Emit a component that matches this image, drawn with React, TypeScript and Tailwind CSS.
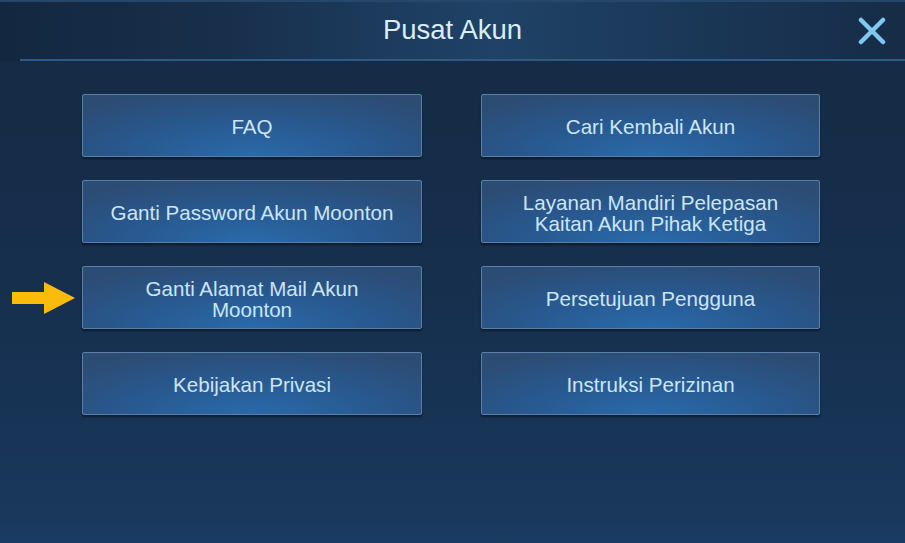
import React from "react";

const items: string[][] = [
  ["FAQ"],
  ["Cari Kembali Akun"],
  ["Ganti Password Akun Moonton"],
  ["Layanan Mandiri Pelepasan", "Kaitan Akun Pihak Ketiga"],
  ["Ganti Alamat Mail Akun", "Moonton"],
  ["Persetujuan Pengguna"],
  ["Kebijakan Privasi"],
  ["Instruksi Perizinan"],
];

function Btn({ lines }: { lines: string[] }) {
  return (
    <div className="h-[63px] rounded-[2px] border border-[#5a80a8] bg-[radial-gradient(ellipse_70%_110%_at_50%_100%,#2a6aaa_0%,#28588e_55%,#2c4c74_100%)] shadow-[0_2px_2px_rgba(5,15,30,0.6)] flex flex-col items-center justify-center pt-[2px] text-[20.6px] leading-[21px] text-[#cce5f7]">
      {lines.map((l) => (
        <span key={l}>{l}</span>
      ))}
    </div>
  );
}

export default function App() {
  return (
    <div
      className="relative w-[905px] h-[543px] overflow-hidden bg-[linear-gradient(180deg,#152a43_0%,#16304f_60%,#19385c_95%,#1b3c62_100%)]"
      style={{ fontFamily: '"Liberation Sans", Arial, sans-serif' }}
    >
      {/* header */}
      <div className="relative h-[61px] border-t-2 border-[#27476a] bg-[linear-gradient(90deg,#132740_0%,#182f4b_25%,#1d3d60_45%,#1f4266_55%,#1b3858_75%,#162c47_100%)]">
        <div className="absolute left-[20px] right-0 bottom-0 h-[2px] bg-[#2d5b86]" />
        <div className="h-full flex items-center justify-center pb-[3px] text-[27.5px] text-[#dcecf8]">
          Pusat Akun
        </div>
        <div className="absolute right-[19px] top-[15px] w-[28px] h-[28px]">
          <svg viewBox="0 0 28 28" width="28" height="28">
            <path d="M3 3 L25 25 M25 3 L3 25" stroke="#80c8f2" strokeWidth="4.5" strokeLinecap="round" />
          </svg>
        </div>
      </div>

      {/* buttons */}
      <div className="pt-[33px] pl-[82px] grid grid-cols-[340px_339px] gap-x-[59px] gap-y-[23px]">
        {items.map((l, i) => (
          <Btn key={i} lines={l} />
        ))}
      </div>

      {/* annotation arrow */}
      <svg className="absolute left-[11px] top-[281px]" width="66" height="34" viewBox="0 0 66 34">
        <path d="M1 11 L33 11 L33 1 L64 17 L33 33 L33 23 L1 23 Z" fill="#fbbb0a" />
      </svg>
    </div>
  );
}
